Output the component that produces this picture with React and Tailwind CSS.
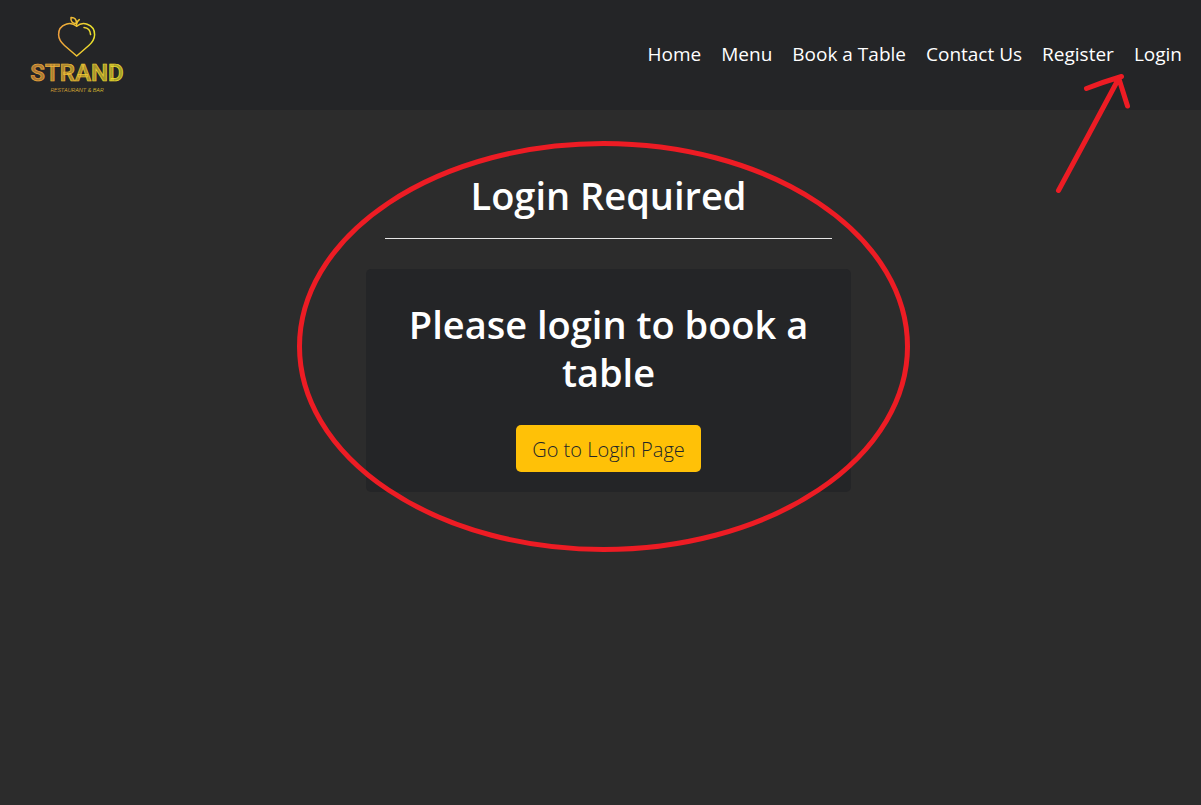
const links = ["Home", "Menu", "Book a Table", "Contact Us", "Register", "Login"];

function Logo() {
  return (
    <svg viewBox="20 10 114 90" className="h-[90px] w-[114px]" role="img" aria-label="Strand Restaurant and Bar">
      <defs>
        <linearGradient id="gold" gradientUnits="userSpaceOnUse" x1="30" y1="60" x2="124" y2="60">
          <stop offset="0" stopColor="#ee9f3c" />
          <stop offset="0.5" stopColor="#efc332" />
          <stop offset="1" stopColor="#e9e42c" />
        </linearGradient>
        <linearGradient id="goldHeart" gradientUnits="userSpaceOnUse" x1="58" y1="40" x2="95" y2="40">
          <stop offset="0" stopColor="#ee9f3c" />
          <stop offset="0.5" stopColor="#efc332" />
          <stop offset="1" stopColor="#e9e42c" />
        </linearGradient>
      </defs>
      <g fill="none" stroke="url(#goldHeart)" strokeWidth="1.5" strokeLinecap="round" strokeLinejoin="round">
        <path d="M76.7 26.3C73.5 23.6 69.5 23 66 24.3C61 26 58.5 30 58.6 34.8C58.7 39.5 61 42.4 64.500 45.500L76.7 56L88.8 45.500C92.4 42.4 94.5 39.5 94.6 34.8C94.7 30 92 26 87.2 24.3C83.6 23 79.8 23.6 76.7 26.3Z" />
        <path d="M76.6 26.2C76.3 24 77.2 21.3 79.3 19.6" />
        <path d="M76.3 23.4C72.6 23.6 70.4 21.2 71 17.6C74.8 17.4 76.8 19.8 76.3 23.4Z" />
        <path d="M84 27.6C87.8 28 90.3 30.6 90.6 34.6" />
      </g>
      <text x="77" y="81" textAnchor="middle" fontSize="24" fill="url(#gold)" fillOpacity="0.65" stroke="url(#gold)" strokeWidth="0.7" className="font-[Roboto,sans-serif] font-semibold">STRAND</text>
      <text x="77" y="92" textAnchor="middle" fontSize="6" fill="url(#gold)" className="font-[Roboto,sans-serif] font-light italic">RESTAURANT &amp; BAR</text>
    </svg>
  );
}

export default function App() {
  return (
    <div className="min-h-screen bg-[#2c2c2c] font-['Open_Sans','Noto_Sans',sans-serif] text-white">
      <header className="relative flex items-center justify-between bg-[#242527] py-2.5 pr-[19px] pl-5">
        <a href="#home"><Logo /></a>
        <nav className="flex gap-5 pb-0.5 text-[19px] leading-7">
          {links.map((label) => (
            <a key={label} href="#" className="whitespace-nowrap">{label}</a>
          ))}
        </nav>
        <svg viewBox="1050 70 90 130" className="pointer-events-none absolute top-[70px] right-[61px] h-[130px] w-[90px]" aria-hidden="true">
          <path d="M1058.500 190.500L1089 134L1119 78M1086.500 88.500Q1103 82 1121.500 76.500M1119 79L1127.500 106" fill="none" stroke="#ed1c24" strokeWidth="5" strokeLinecap="round" strokeLinejoin="round" />
        </svg>
      </header>
      <main className="flex justify-center pt-[61px] pl-4">
        <div className="relative w-[485px] max-w-full text-center">
          <h1 className="text-[38px] leading-12 font-semibold">Login Required</h1>
          <hr className="mx-[19px] mt-[19px] mb-[30px] border-[#e6e6e6]" />
          <section className="rounded-[5px] bg-[#242527] px-5 pt-[31px] pb-5">
            <h2 className="text-[38px] leading-12 font-semibold">Please login to book a table</h2>
            <button type="button" className="mt-[29px] rounded-[5px] bg-[#ffc107] px-4 pt-[11px] pb-[9px] text-[20px] leading-[27px] font-light text-[#212529]">Go to Login Page</button>
          </section>
          <svg viewBox="296 140 616 412" className="pointer-events-none absolute -top-[31px] -left-[70px] h-[412px] w-[616px] max-w-none" aria-hidden="true">
            <ellipse cx="603.5" cy="346.500" rx="304" ry="203" fill="none" stroke="#ed1c24" strokeWidth="5" />
          </svg>
        </div>
      </main>
    </div>
  );
}
